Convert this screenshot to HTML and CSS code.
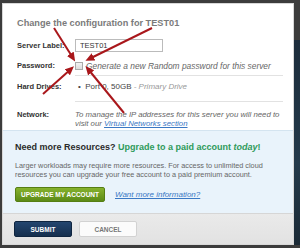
FILE: index.html
```html
<!DOCTYPE html>
<html lang="en">
<head>
    <meta charset="UTF-8">
    <link rel="stylesheet" href="styles.css">
</head>
<body>
    <div class="stage">
        <div class="dialog">
            <h2 class="title">Change the configuration for TEST01</h2>
            <div class="form">
                <div class="row">
                    <div class="label">Server Label:</div>
                    <div class="field"><input class="text-input" type="text" value="TEST01"></div>
                </div>
                <div class="row sep">
                    <div class="label">Password:</div>
                    <div class="field note"><span class="check"></span>Generate a new Random password for this server</div>
                </div>
                <div class="row sep">
                    <div class="label">Hard Drives:</div>
                    <div class="field drive">&bull;&nbsp; Port 0, 50GB <em>- Primary Drive</em></div>
                </div>
                <div class="row">
                    <div class="label">Network:</div>
                    <div class="field note">To manage the IP addresses for this server you will need to<br>visit our <a href="#">Virtual Networks section</a></div>
                </div>
            </div>
            <div class="promo">
                <h3>Need more Resources? <span class="green">Upgrade to a paid account <em>today</em>!</span></h3>
                <p>Larger workloads may require more resources. For access to unlimited cloud resources you can upgrade your free account to a paid premium account.</p>
                <div class="promo-actions">
                    <button class="btn-upgrade">UPGRADE MY ACCOUNT</button>
                    <a href="#" class="more">Want more information?</a>
                </div>
            </div>
            <div class="footer">
                <button class="btn-submit">SUBMIT</button>
                <button class="btn-cancel">CANCEL</button>
            </div>
        </div>
        <div class="side"></div>
        <svg class="arrows" width="300" height="248" viewBox="0 0 300 248">
            <defs>
                <marker id="head" markerWidth="9" markerHeight="8" refX="5" refY="4" orient="auto" markerUnits="userSpaceOnUse">
                    <path d="M0,0 L9,4 L0,8 Z" fill="#a9171b"/>
                </marker>
            </defs>
            <g stroke="#a9171b" stroke-width="2" fill="none" marker-end="url(#head)">
                <line x1="54" y1="28" x2="73" y2="58"/>
                <line x1="152" y1="28" x2="89" y2="59"/>
                <line x1="43" y1="94" x2="71" y2="69"/>
                <line x1="124" y1="113" x2="88" y2="69"/>
            </g>
        </svg>
    </div>
</body>
</html>
```

FILE: styles.css
```css
* {
    margin: 0;
    padding: 0;
    box-sizing: border-box;
}

body {
    width: 300px;
    height: 248px;
    overflow: hidden;
    background: #3c3c3c;
    font-family: "Liberation Sans", Arial, sans-serif;
}

.stage {
    position: relative;
    display: flex;
    height: 248px;
    padding: 3px 0 3px 2px;
}

.dialog {
    width: 292px;
    display: flex;
    flex-direction: column;
    background: #fff;
    border: 1px solid #d8d8d8;
}

.side {
    flex: 1;
    margin-top: 37px;
    background: linear-gradient(180deg, #1d2d3c, #23394a 60%, #1b2a36);
}

.title {
    font-size: 9.2px;
    line-height: 12px;
    color: #7b7b7b;
    font-weight: bold;
    padding: 13px 0 0 14px;
    height: 35px;
}

.form {
    padding: 0 6px 0 14px;
    height: 91px;
}

.row {
    display: flex;
    align-items: flex-start;
}

.label {
    width: 58px;
    flex-shrink: 0;
    font-size: 7.5px;
    line-height: 10px;
    font-weight: bold;
    color: #333;
}

.field {
    flex: 1;
}

.row:nth-child(1) {
    height: 20px;
}

.row:nth-child(1) .label {
    padding-top: 2px;
}

.text-input {
    display: block;
    width: 88px;
    height: 13px;
    border: 1px solid #bbb;
    font-family: "Liberation Sans", Arial, sans-serif;
    font-size: 7.5px;
    color: #333;
    padding: 0 4px;
    outline: none;
}

.sep .field {
    border-bottom: 1px solid #e2e2e2;
    margin-right: 4px;
}

.row:nth-child(2) {
    height: 17px;
    padding-top: 2px;
}

.row:nth-child(2) .field {
    height: 15px;
}

.row:nth-child(3) {
    height: 26px;
    padding-top: 6px;
}

.row:nth-child(3) .field {
    height: 20px;
}

.row:nth-child(4) {
    padding-top: 8px;
}

.note {
    font-size: 8.4px;
    font-style: italic;
    color: #666;
    line-height: 10px;
}

.row:nth-child(4) .note {
    font-size: 7.8px;
    line-height: 9px;
    white-space: nowrap;
}

.check {
    display: inline-block;
    width: 8px;
    height: 8px;
    border: 1px solid #aaa;
    background: linear-gradient(#f4f4f4, #ddd);
    vertical-align: -1px;
    margin-right: 3px;
}

.drive {
    font-size: 8px;
    line-height: 10px;
    color: #444;
    padding-left: 3px;
}

.drive em {
    color: #999;
}

.note a {
    color: #3a78c4;
}

.promo {
    height: 83px;
    background: #e9f3fb;
    border-top: 1px solid #d4e4f0;
    padding: 10px 10px 0 12px;
}

.promo h3 {
    font-size: 9px;
    line-height: 12px;
    color: #2b2b2b;
    font-weight: bold;
}

.green {
    color: #2e9a5a;
}

.promo p {
    margin-top: 8px;
    font-size: 7.3px;
    line-height: 9px;
    color: #666;
}

.promo-actions {
    margin-top: 8px;
    display: flex;
    align-items: center;
    gap: 10px;
}

.btn-upgrade {
    width: 90px;
    height: 15px;
    border: 1px solid #557e13;
    border-radius: 2px;
    background: linear-gradient(#86b22e, #5b8a16);
    color: #fff;
    font-family: "Liberation Sans", Arial, sans-serif;
    font-size: 6.5px;
    font-weight: bold;
}

.more {
    font-size: 8px;
    font-style: italic;
    color: #3a78c4;
}

.footer {
    flex: 1;
    background: linear-gradient(#eaeaea, #e2e2e2);
    border-top: 1px solid #d6d6d6;
    display: flex;
    gap: 7px;
    padding: 7px 0 0 11px;
}

.btn-submit,
.btn-cancel {
    width: 58px;
    height: 16px;
    border-radius: 2px;
    font-family: "Liberation Sans", Arial, sans-serif;
    font-size: 6.5px;
    font-weight: bold;
}

.btn-submit {
    background: linear-gradient(#24466f, #152f4e);
    border: 1px solid #0f2540;
    color: #fff;
}

.btn-cancel {
    background: #fbfbfb;
    border: 1px solid #d2d2d2;
    color: #777;
}

.arrows {
    position: absolute;
    left: 0;
    top: 0;
}
```
